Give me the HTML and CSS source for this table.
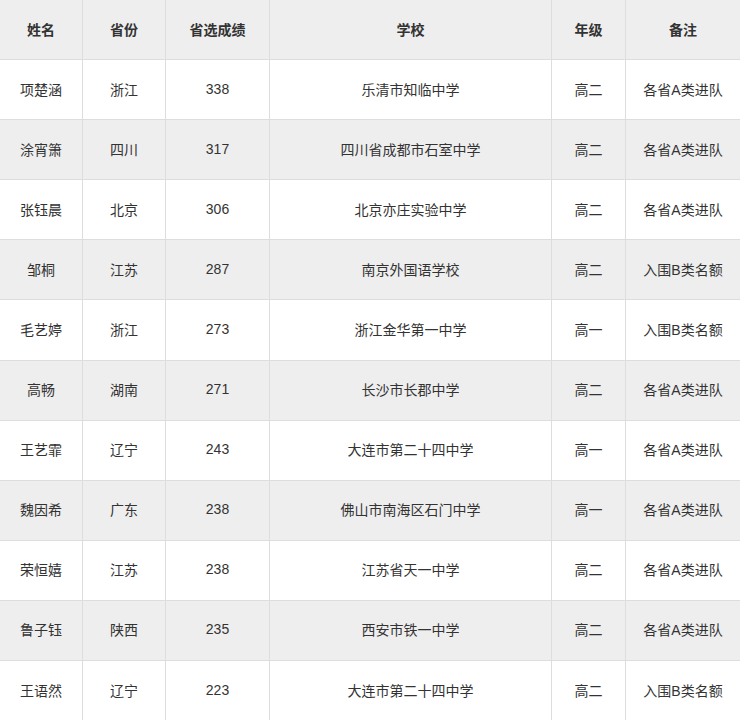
FILE: index.html
```html
<!DOCTYPE html>
<html lang="zh">
<head>
<meta charset="utf-8">
<title>省选成绩</title>
<link rel="stylesheet" href="styles.css">
</head>
<body>
<table class="score-table">
  <colgroup>
    <col class="c-name"><col class="c-prov"><col class="c-score"><col class="c-school"><col class="c-grade"><col class="c-note">
  </colgroup>
  <thead>
    <tr><th>姓名</th><th>省份</th><th>省选成绩</th><th>学校</th><th>年级</th><th>备注</th></tr>
  </thead>
  <tbody>
    <tr><td>项楚涵</td><td>浙江</td><td>338</td><td>乐清市知临中学</td><td>高二</td><td>各省A类进队</td></tr>
    <tr><td>涂宵箫</td><td>四川</td><td>317</td><td>四川省成都市石室中学</td><td>高二</td><td>各省A类进队</td></tr>
    <tr><td>张钰晨</td><td>北京</td><td>306</td><td>北京亦庄实验中学</td><td>高二</td><td>各省A类进队</td></tr>
    <tr><td>邹桐</td><td>江苏</td><td>287</td><td>南京外国语学校</td><td>高二</td><td>入围B类名额</td></tr>
    <tr><td>毛艺婷</td><td>浙江</td><td>273</td><td>浙江金华第一中学</td><td>高一</td><td>入围B类名额</td></tr>
    <tr><td>高畅</td><td>湖南</td><td>271</td><td>长沙市长郡中学</td><td>高二</td><td>各省A类进队</td></tr>
    <tr><td>王艺霏</td><td>辽宁</td><td>243</td><td>大连市第二十四中学</td><td>高一</td><td>各省A类进队</td></tr>
    <tr><td>魏因希</td><td>广东</td><td>238</td><td>佛山市南海区石门中学</td><td>高一</td><td>各省A类进队</td></tr>
    <tr><td>荣恒嬉</td><td>江苏</td><td>238</td><td>江苏省天一中学</td><td>高二</td><td>各省A类进队</td></tr>
    <tr><td>鲁子钰</td><td>陕西</td><td>235</td><td>西安市铁一中学</td><td>高二</td><td>各省A类进队</td></tr>
    <tr><td>王语然</td><td>辽宁</td><td>223</td><td>大连市第二十四中学</td><td>高二</td><td>入围B类名额</td></tr>
  </tbody>
</table>
</body>
</html>
```
FILE: styles.css
```css
html, body {
  margin: 0;
  padding: 0;
  background: #fff;
  overflow: hidden;
}
body {
  font-family: "Liberation Sans", "Noto Sans CJK SC", sans-serif;
  font-size: 14px;
  color: #333;
}
.score-table {
  border-collapse: collapse;
  table-layout: fixed;
  width: 741px;
  margin: -1px 0 0 -1px;
}
.c-name { width: 83px; }
.c-prov { width: 83px; }
.c-score { width: 104px; }
.c-school { width: 282px; }
.c-grade { width: 74px; }
.c-note { width: 115px; }
.score-table th,
.score-table td {
  border: 1px solid #ddd;
  text-align: center;
  vertical-align: middle;
  padding: 0 0 2px;
  height: 57.1px;
  white-space: nowrap;
}
.score-table th {
  background: #eee;
  font-weight: bold;
}
.score-table tbody tr:nth-child(even) td {
  background: #eee;
}
.score-table tbody tr:last-child td {
  border-bottom-style: hidden;
}
```
